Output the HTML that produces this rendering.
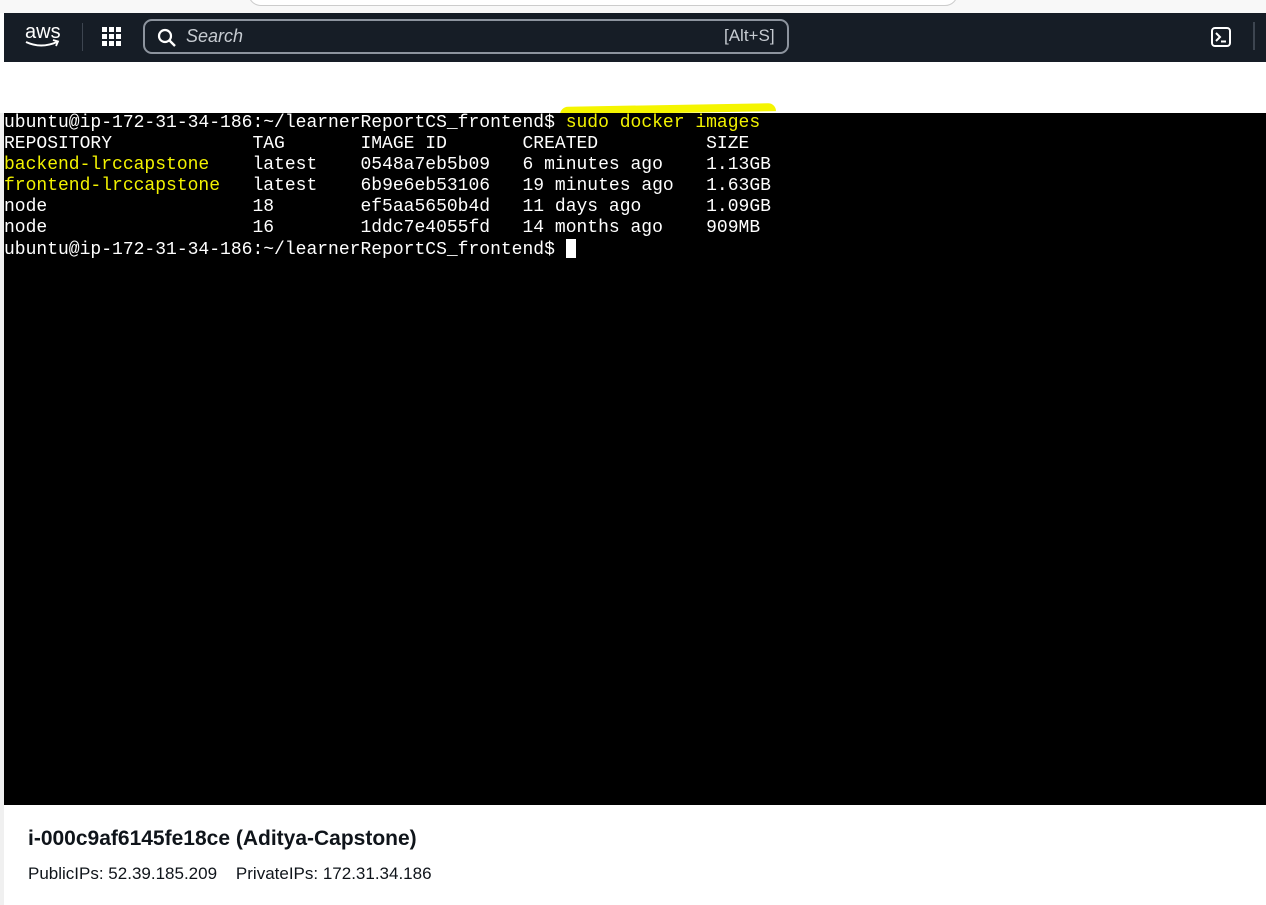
<!DOCTYPE html>
<html><head><style>
*{margin:0;padding:0;box-sizing:border-box}
body{width:1266px;height:900px;overflow:hidden;background:#fff;position:relative;font-family:"Liberation Sans",sans-serif}
.top{position:absolute;left:0;top:0;width:1266px;height:13px;background:#f8f8f8}
.top .url{position:absolute;left:248px;top:-20px;width:710px;height:26px;border:1px solid #ccc;border-radius:13px;background:#fff}
.nav{position:absolute;left:4px;top:13px;width:1262px;height:49px;background:#161d26}
.term{position:absolute;left:4px;top:113px;width:1262px;height:692px;background:#000;font-family:"Liberation Mono",monospace;font-size:18px;line-height:21px;color:#fff;white-space:pre;padding-top:0}
.y{color:#f2f200}
.cur{display:inline-block;width:10px;height:19px;background:#fff;vertical-align:-4px}
</style></head><body>
<div class="top"><div class="url"></div></div>
<div class="nav">
<svg style="position:absolute;left:18px;top:8px" width="42" height="30" viewBox="0 0 42 30"><text x="3" y="17" fill="#fff" font-family="Liberation Sans" font-size="20">aws</text><path d="M4 21 Q19 28 35 21" stroke="#fff" stroke-width="2" fill="none"/><path d="M31 19 L36 20.5 L34 25" stroke="#fff" stroke-width="1.8" fill="none"/></svg>
<div style="position:absolute;left:78px;top:10px;width:1px;height:28px;background:#3d4550"></div>
<svg style="position:absolute;left:98px;top:14px" width="20" height="20"><g fill="#fff"><rect x="0" y="0" width="5" height="5"/><rect x="7" y="0" width="5" height="5"/><rect x="14" y="0" width="5" height="5"/><rect x="0" y="7" width="5" height="5"/><rect x="7" y="7" width="5" height="5"/><rect x="14" y="7" width="5" height="5"/><rect x="0" y="14" width="5" height="5"/><rect x="7" y="14" width="5" height="5"/><rect x="14" y="14" width="5" height="5"/></g></svg>
<div style="position:absolute;left:139px;top:6px;width:646px;height:35px;border:2px solid #8d949e;border-radius:9px"></div>
<svg style="position:absolute;left:153px;top:15px" width="20" height="20"><circle cx="8" cy="8" r="6" stroke="#fff" stroke-width="2.2" fill="none"/><path d="M12.5 12.5 L18 18" stroke="#fff" stroke-width="2.4"/></svg>
<div style="position:absolute;left:182px;top:13px;color:#c6cbd1;font-size:18px;font-style:italic">Search</div>
<div style="position:absolute;left:720px;top:13px;color:#c6cbd1;font-size:17px">[Alt+S]</div>
<svg style="position:absolute;left:1207px;top:14px" width="20" height="20"><rect x="1" y="1" width="18" height="18" rx="3" stroke="#fff" stroke-width="2" fill="none"/><path d="M5 6 L9 10 L5 14" stroke="#fff" stroke-width="2" fill="none"/><path d="M10 14.5 H15" stroke="#fff" stroke-width="2"/></svg>
<div style="position:absolute;left:1249px;top:9px;width:2px;height:28px;background:#3d4550"></div>
</div>
<div style="position:absolute;left:560px;top:105px;width:216px;height:8px;background:#f5f500;border-radius:8px 8px 0 0;transform:skewY(-1deg)"></div>
<div style="position:absolute;left:0;top:113px;width:4px;height:792px;background:#f0f0f0"></div>
<div class="term">ubuntu@ip-172-31-34-186:~/learnerReportCS_frontend$ <span class="y">sudo docker images</span>
REPOSITORY             TAG       IMAGE ID       CREATED          SIZE
<span class="y">backend-lrccapstone</span>    latest    0548a7eb5b09   6 minutes ago    1.13GB
<span class="y">frontend-lrccapstone</span>   latest    6b9e6eb53106   19 minutes ago   1.63GB
node                   18        ef5aa5650b4d   11 days ago      1.09GB
node                   16        1ddc7e4055fd   14 months ago    909MB
ubuntu@ip-172-31-34-186:~/learnerReportCS_frontend$ <span class="cur"></span></div>
<div style="position:absolute;left:28px;top:827px;font-size:21px;font-weight:bold;color:#0f141a">i-000c9af6145fe18ce (Aditya-Capstone)</div>
<div style="position:absolute;left:28px;top:864px;font-size:17px;color:#0f141a">PublicIPs: 52.39.185.209&nbsp;&nbsp;&nbsp; PrivateIPs: 172.31.34.186</div>
</body></html>
